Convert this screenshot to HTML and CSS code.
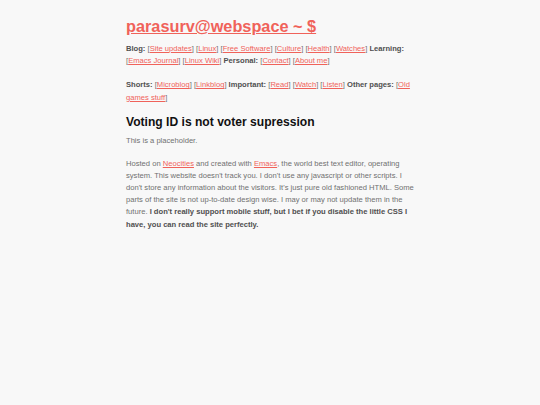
FILE: index.html
```html
<!DOCTYPE html>
<html lang="en">
<head>
<meta charset="utf-8">
<title>parasurv@webspace</title>
<link rel="stylesheet" href="styles.css">
</head>
<body>
<div class="page">
<header class="site-header">
<h1 class="site-title"><a href="#">parasurv@webspace ~ $</a></h1>
<p class="nav"><b>Blog:</b> [<a href="#">Site updates</a>] [<a href="#">Linux</a>] [<a href="#">Free Software</a>] [<a href="#">Culture</a>] [<a href="#">Health</a>] [<a href="#">Watches</a>] <b>Learning:</b> [<a href="#">Emacs Journal</a>] [<a href="#">Linux Wiki</a>] <b>Personal:</b> [<a href="#">Contact</a>] [<a href="#">About me</a>]</p>
<p class="nav"><b>Shorts:</b> [<a href="#">Microblog</a>] [<a href="#">Linkblog</a>] <b>Important:</b> [<a href="#">Read</a>] [<a href="#">Watch</a>] [<a href="#">Listen</a>] <b>Other pages:</b> [<a href="#">Old games stuff</a>]</p>
</header>
<main>
<h2 class="post-title">Voting ID is not voter supression</h2>
<p class="text">This is a placeholder.</p>
<p class="text">Hosted on <a href="#">Neocities</a> and created with <a href="#">Emacs</a>, the world best text editor, operating system. This website doesn't track you. I don't use any javascript or other scripts. I don't store any information about the visitors. It's just pure old fashioned HTML. Some parts of the site is not up-to-date design wise. I may or may not update them in the future. <b>I don't really support mobile stuff, but I bet if you disable the little CSS I have, you can read the site perfectly.</b></p>
</main>
</div>
</body>
</html>
```

FILE: styles.css
```css
html { background: #f8f8f8; }
body {
  margin: 0;
  background: #f8f8f8;
  font-family: "Liberation Sans", Arial, sans-serif;
  color: #707070;
}
.page {
  width: 288px;
  margin: 0 auto;
  padding-top: 16px;
}
a { color: #f0625a; }
.site-title {
  margin: 0 0 7px;
  font-size: 16.3px;
  font-weight: bold;
  line-height: 20px;
}
.site-title a { color: #f0625a; }
.nav {
  margin: 0 0 12px;
  font-size: 7.6px;
  line-height: 12.2px;
}
.nav b, .text b { color: #505050; }
.post-title {
  margin: 0 0 5px;
  font-size: 12.1px;
  line-height: 16px;
  color: #111;
}
.nav + .nav { margin-bottom: 10.6px; }
.text {
  margin: 0 0 10px;
  font-size: 7.6px;
  line-height: 12.2px;
}
```
